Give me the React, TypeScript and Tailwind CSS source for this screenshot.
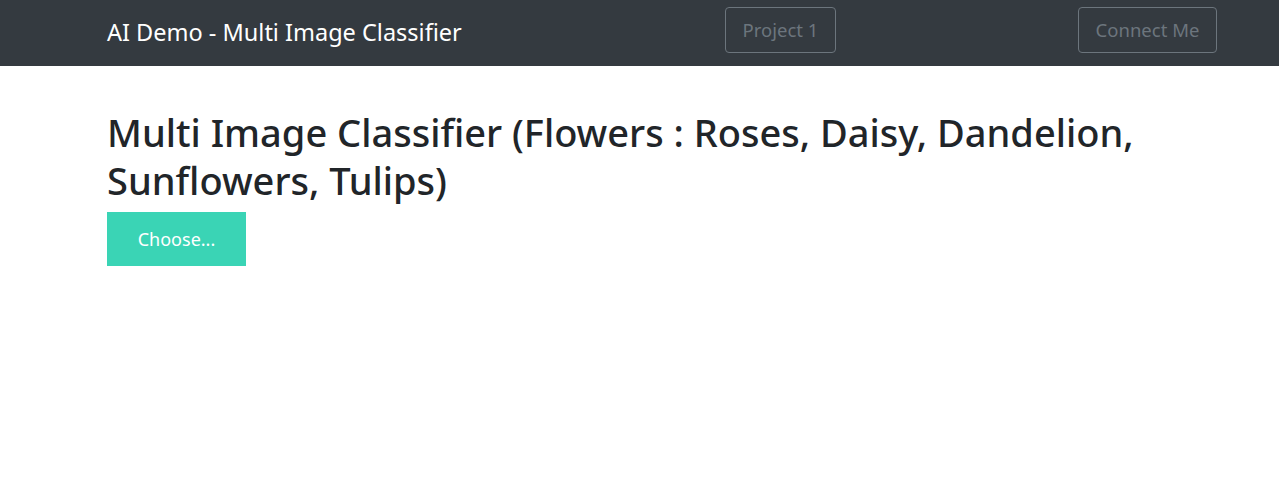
import React from "react";

export default function App() {
  const font = { fontFamily: '"Noto Sans", "Open Sans", sans-serif' };
  return (
    <div className="min-h-[482px] bg-white" style={font}>
      <nav className="h-[66px] bg-[#343a40] flex items-center pl-[107px] pr-[62px]">
        <div className="text-white text-[23.5px] leading-none flex-1">AI Demo - Multi Image Classifier</div>
        <div className="flex-1 flex items-center">
          <button className="ml-[63px] mb-[6px] h-[46px] w-[111px] border border-[#6c757d] rounded-[4px] text-[#6c757d] text-[18.5px]">Project 1</button>
          <div className="flex-1" />
          <button className="mb-[6px] h-[46px] w-[139px] border border-[#6c757d] rounded-[4px] text-[#6c757d] text-[18.5px]">Connect Me</button>
        </div>
      </nav>
      <main className="pl-[107px] pr-[62px] pt-[42px]">
        <h1 className="text-[38px] leading-[48px] font-medium text-[#212529] mb-[8px]">
          Multi Image Classifier (Flowers : Roses, Daisy, Dandelion, Sunflowers, Tulips)
        </h1>
        <button className="w-[139px] h-[54px] bg-[#3ad4b5] text-white text-[18px]">Choose...</button>
      </main>
    </div>
  );
}
